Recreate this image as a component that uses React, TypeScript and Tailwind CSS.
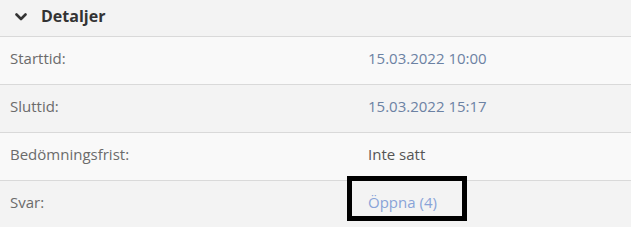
import React from "react";

const rows: { label: string; value: string; kind: "date" | "plain" | "link" }[] = [
  { label: "Starttid:", value: "15.03.2022 10:00", kind: "date" },
  { label: "Sluttid:", value: "15.03.2022 15:17", kind: "date" },
  { label: "Bedömningsfrist:", value: "Inte satt", kind: "plain" },
  { label: "Svar:", value: "Öppna (4)", kind: "link" },
];

export default function App() {
  return (
    <div
      className="w-[631px] h-[227px] overflow-hidden bg-[#f3f3f3]"
      style={{ fontFamily: '"Open Sans", "Noto Sans", sans-serif' }}
    >
      <div className="h-[37px] flex items-center border-b border-[#d9d9d9] bg-[#f3f3f3]">
        <svg className="ml-[15px] mt-[-3px]" width="12" height="8" viewBox="0 0 12 8">
          <polyline points="1.5,1.5 6,6 10.5,1.5" fill="none" stroke="#333" strokeWidth="2.6" strokeLinecap="round" strokeLinejoin="round" />
        </svg>
        <span className="ml-[14px] mt-[-5px] text-[16px] font-bold text-[#333]">Detaljer</span>
      </div>
      {rows.map((r, i) => (
        <div
          key={r.label}
          className={`h-[48px] pb-[6px] grid grid-cols-[368px_1fr] items-center text-[15px] leading-[20px] ${i < 3 ? "border-b border-[#d9d9d9]" : ""} ${i % 2 === 0 ? "bg-[#f9f9f9]" : "bg-[#f3f3f3]"}`}
        >
          <span className="pl-[10px] text-[#6b6b6b]">{r.label}</span>
          {r.kind === "date" && <span className="text-[#6c82a3]">{r.value}</span>}
          {r.kind === "plain" && <span className="text-[#555]">{r.value}</span>}
          {r.kind === "link" && (
            <span className="relative w-fit text-[#89a3d8]">
              {r.value}
              <span className="absolute left-[-21px] top-[-16px] w-[120px] h-[45px] border-[5px] border-black" />
            </span>
          )}
        </div>
      ))}
    </div>
  );
}
